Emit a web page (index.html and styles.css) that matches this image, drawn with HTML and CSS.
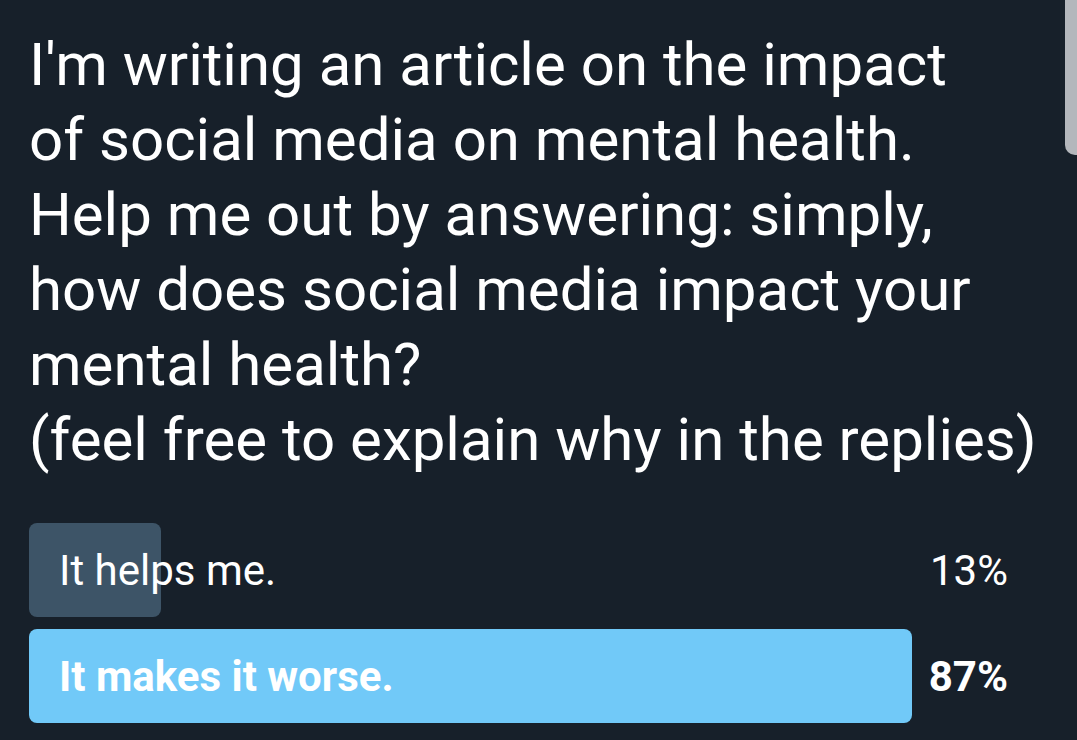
FILE: index.html
```html
<!DOCTYPE html>
<html lang="en">
<head>
<meta charset="utf-8">
<title>Poll</title>
<link rel="stylesheet" href="styles.css">
</head>
<body>
<main class="tweet">
  <p class="question">
    <span class="line">I'm writing an article on the impact</span>
    <span class="line">of social media on mental health.</span>
    <span class="line">Help me out by answering: simply,</span>
    <span class="line">how does social media impact your</span>
    <span class="line">mental health?</span>
    <span class="line">(feel free to explain why in the replies)</span>
  </p>
  <section class="poll">
    <div class="option">
      <div class="track">
        <div class="bar bar-loser" style="width: 14.95%"></div>
        <span class="label">It helps me.</span>
      </div>
      <span class="pct">13%</span>
    </div>
    <div class="option winner">
      <div class="track">
        <div class="bar bar-winner" style="width: 100%"></div>
        <span class="label">It makes it worse.</span>
      </div>
      <span class="pct">87%</span>
    </div>
  </section>
</main>
<div class="scrollbar"></div>
</body>
</html>
```

FILE: styles.css
```css
html, body {
  margin: 0;
  padding: 0;
  background: #17202a;
  width: 1077px;
  height: 740px;
  overflow: hidden;
}

body {
  font-family: Roboto, "Noto Sans", Arial, sans-serif;
  color: #ffffff;
  position: relative;
}

.tweet {
  padding: 27px 0 0 29px;
}

.question {
  margin: 0;
  font-size: 60px;
  line-height: 75px;
  white-space: nowrap;
}

.line {
  display: block;
}

.poll {
  margin-top: 46px;
  display: flex;
  flex-direction: column;
  gap: 12px;
}

.option {
  display: flex;
  align-items: center;
  height: 94px;
}

.track {
  width: 883px;
  height: 94px;
  display: grid;
  align-items: center;
}

.bar {
  grid-area: 1 / 1;
  height: 94px;
  border-radius: 8px;
}

.bar-loser {
  background: #3d5467;
}

.bar-winner {
  background: #71c9f8;
}

.label {
  grid-area: 1 / 1;
  padding-left: 30px;
  font-size: 42px;
  position: relative;
}

.pct {
  margin-left: auto;
  margin-right: 69px;
  font-size: 42px;
}

.winner .label,
.winner .pct {
  font-weight: 700;
}

.scrollbar {
  position: absolute;
  top: 0;
  right: 0;
  width: 12px;
  height: 155px;
  background: #b4b7bc;
  border-bottom-left-radius: 10px;
}
```
